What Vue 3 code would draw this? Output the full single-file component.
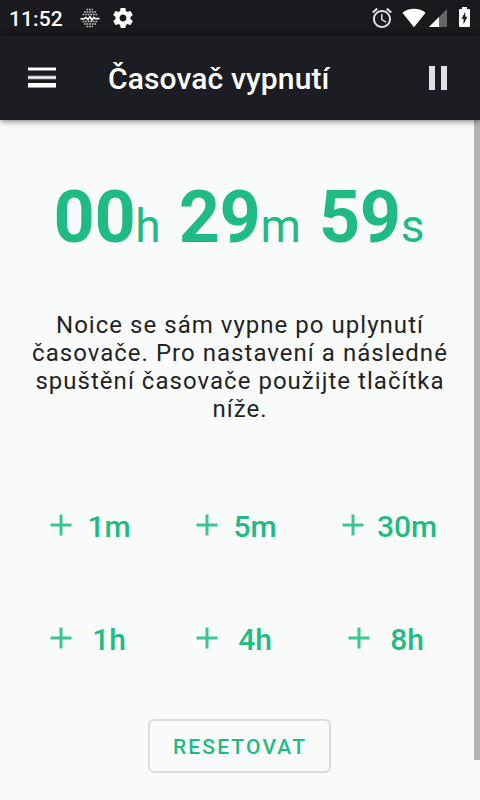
<script setup>
import { ref } from 'vue'

const title = 'Časovač vypnutí'
const time = ref([
  { value: '00', unit: 'h' },
  { value: '29', unit: 'm' },
  { value: '59', unit: 's' },
])
const steps = ['1m', '5m', '30m', '1h', '4h', '8h']
const lines = [
  'Noice se sám vypne po uplynutí',
  'časovače. Pro nastavení a následné',
  'spuštění časovače použijte tlačítka',
  'níže.',
]
const dotRows = [
  { y: 1.5, x1: 6.5, x2: 13 },
  { y: 4, x1: 4, x2: 16 },
  { y: 6.5, x1: 2.5, x2: 17.5 },
  { y: 13.5, x1: 2.5, x2: 17.5 },
  { y: 16, x1: 4, x2: 16 },
  { y: 18.5, x1: 6.5, x2: 13 },
]
</script>

<template>
  <div class="screen">
    <header class="status">
      <span class="clock">11:52</span>
      <svg class="wave" width="20" height="21" viewBox="0 0 20 21">
        <g stroke="#c4c4c6" stroke-width="1.5" stroke-dasharray="1.7 0.9">
          <line v-for="r in dotRows" :key="r.y" :x1="r.x1" :x2="r.x2" :y1="r.y" :y2="r.y" />
        </g>
        <path d="M.5 10.800H4L6 9.500l2 2L10 8.700l2 3.300L13.800 9.500l1.500 1.100h4.200" fill="none" stroke="#f5f5f5" stroke-width="1.700" />
      </svg>
      <svg class="gear" width="24" height="24" viewBox="0 0 24 24">
        <path fill="#fff" d="M19.43 12.98c.04-.32.07-.64.07-.98s-.03-.66-.07-.98l2.11-1.65c.19-.15.24-.42.12-.64l-2-3.46c-.12-.22-.39-.3-.61-.22l-2.49 1c-.52-.4-1.08-.73-1.69-.98l-.38-2.65C14.46 2.18 14.25 2 14 2h-4c-.25 0-.46.18-.49.42l-.38 2.65c-.61.25-1.17.59-1.69.98l-2.49-1c-.23-.09-.49 0-.61.22l-2 3.46c-.13.22-.07.49.12.64l2.11 1.65c-.04.32-.07.65-.07.98s.03.66.07.98l-2.11 1.65c-.19.15-.24.42-.12.64l2 3.46c.12.22.39.3.61.22l2.49-1c.52.4 1.08.73 1.69.98l.38 2.65c.03.24.24.42.49.42h4c.25 0 .46-.18.49-.42l.38-2.65c.61-.25 1.17-.59 1.69-.98l2.49 1c.23.09.49 0 .61-.22l2-3.46c.12-.22.07-.49-.12-.64l-2.11-1.65zM12 15.5c-1.93 0-3.5-1.57-3.5-3.5s1.57-3.5 3.5-3.5 3.5 1.57 3.5 3.5-1.57 3.5-3.5 3.5z" />
      </svg>
      <span class="grow"></span>
      <svg class="alarm" width="22" height="22" viewBox="1 1 22 22">
        <path fill="#dedee0" d="M22 5.72l-4.6-3.86-1.29 1.53 4.6 3.86L22 5.72zM7.88 3.39L6.6 1.86 2 5.71l1.29 1.53 4.59-3.85zM12.5 8H11v6l4.75 2.85.75-1.23-4-2.37V8zM12 4c-4.97 0-9 4.03-9 9s4.02 9 9 9c4.97 0 9-4.03 9-9s-4.03-9-9-9zm0 16c-3.87 0-7-3.13-7-7s3.13-7 7-7 7 3.13 7 7-3.13 7-7 7z" />
      </svg>
      <svg class="wifi" width="24" height="20" viewBox="0 0 24 20">
        <path fill="#fff" d="M12 19.2L.4 4.7C3.5 2.2 7.5.7 12 .7s8.500 1.500 11.600 4z" />
      </svg>
      <svg class="signal" width="18" height="18" viewBox="0 0 18 18">
        <path fill="#66666a" d="M18 0v18H0z" />
        <path fill="#fff" d="M10 8v10H0z" />
      </svg>
      <svg class="battery" width="11" height="20" viewBox="0 0 11 20">
        <path fill="#fff" d="M3 0h5v2h2a1 1 0 0 1 1 1v16a1 1 0 0 1-1 1H1a1 1 0 0 1-1-1V3a1 1 0 0 1 1-1h2z" />
        <path fill="#1a1a1f" d="M6.300 4.800v5H8.500l-4 7.500v-5.500H2.500z" />
      </svg>
    </header>

    <nav class="bar">
      <svg class="menu" width="28" height="21" viewBox="0 0 28 21">
        <rect y="0" width="28" height="4" fill="#85868a" />
        <rect y="1" width="28" height="2" fill="#fff" />
        <rect y="8" width="28" height="5" fill="#505156" />
        <rect y="9" width="28" height="3" fill="#c5c5c7" />
        <rect y="10" width="28" height="1" fill="#fff" />
        <rect y="16" width="28" height="5" fill="#97979a" />
        <rect y="16" width="28" height="4" fill="#fff" />
      </svg>
      <h1>{{ title }}</h1>
      <svg class="pause" width="18" height="24" viewBox="0 0 18 24">
        <path fill="#e1e1e1" d="M0 0h6v24H0zM12 0h6v24h-6z" />
      </svg>
    </nav>

    <div class="body">
      <main class="content">
        <div class="timer">
          <div v-for="t in time" :key="t.unit" class="part">
            <span class="value">{{ t.value }}</span><span class="unit">{{ t.unit }}</span>
          </div>
        </div>
        <p class="text">
          <span v-for="l in lines" :key="l" class="line">{{ l }}</span>
        </p>
        <div class="steps">
          <button v-for="s in steps" :key="s" class="step">
            <svg width="36" height="36" viewBox="0 0 24 24">
              <path fill="#1fbb82" fill-opacity=".87" d="M19 13h-6v6h-2v-6H5v-2h6V5h2v6h6z" />
            </svg>
            <span class="label">{{ s }}</span>
          </button>
        </div>
        <button class="reset">RESETOVAT</button>
      </main>
      <div class="scroll"></div>
    </div>
  </div>
</template>

<style>
body {
  margin: 0;
  overflow: hidden;
}
</style>

<style scoped>
.screen {
  width: 480px;
  height: 800px;
  display: flex;
  flex-direction: column;
  background: #f9fbfa;
  font-family: Roboto, sans-serif;
  overflow: hidden;
}
svg {
  display: block;
  flex: none;
}
button {
  font-family: inherit;
  background: none;
  border: 0;
  padding: 0;
}
.status {
  flex: none;
  box-sizing: border-box;
  height: 36px;
  padding: 0 10px 0 9px;
  display: flex;
  align-items: center;
  background: #19191e;
  color: #fff;
}
.clock {
  width: 71px;
  font-size: 21px;
  font-weight: 500;
  line-height: 36px;
  letter-spacing: 0.1px;
  padding-top: 1px;
}
.gear {
  margin-left: 11px;
  width: 24px;
}
.grow {
  flex: 1;
}
.wifi {
  margin: 0 3px 0 9px;
}
.battery {
  margin: 0 0 2px 12px;
}
.bar {
  flex: none;
  box-sizing: border-box;
  height: 84px;
  padding: 0 33px 0 28px;
  display: flex;
  align-items: center;
  background: #1c1d22;
  box-shadow: 0 1px 6px rgba(0, 0, 0, 0.55);
  z-index: 1;
}
.menu {
  margin-bottom: 1px;
}
h1 {
  margin: 2px 0 0 52px;
  flex: 1;
  color: #fff;
  font-size: 30px;
  line-height: 36px;
  font-weight: 500;
  letter-spacing: 0.13px;
  white-space: nowrap;
}
.body {
  flex: 1;
  display: flex;
}
.content {
  width: 474px;
  display: flex;
  flex-direction: column;
}
.scroll {
  width: 6px;
  height: 640px;
  background: #b3b4b3;
}
.timer {
  width: 478px;
  height: 85px;
  margin-top: 55px;
  display: flex;
  justify-content: center;
  gap: 18px;
  color: #1fbb82;
  line-height: 85px;
}
.value {
  font-size: 72px;
  font-weight: 700;
  letter-spacing: -0.4px;
}
.unit {
  font-size: 46px;
}
.text {
  width: 480px;
  margin: 51px 0 0;
  color: #222423;
  font-size: 24px;
  line-height: 28px;
  letter-spacing: 1.03px;
  text-align: center;
}
.line {
  display: block;
  white-space: nowrap;
}
.steps {
  width: 450px;
  margin: 45px 0 0 15px;
  display: grid;
  grid-template-columns: 146px 146px 158px;
  grid-auto-rows: 113px;
}
.step {
  display: flex;
  align-items: center;
  justify-content: center;
  gap: 6px;
  color: #1fbb82;
  font-size: 30px;
  font-weight: 500;
}
.label {
  min-width: 48px;
  line-height: 36px;
  padding-top: 5px;
}
.reset {
  box-sizing: border-box;
  width: 183px;
  height: 54px;
  margin: 25px 0 0 148px;
  border: 2px solid #dbdddc;
  border-radius: 6px;
  color: #1fbb82;
  font-size: 21px;
  font-weight: 500;
  letter-spacing: 2.15px;
  padding: 2px 0 0 1px;
}
</style>
